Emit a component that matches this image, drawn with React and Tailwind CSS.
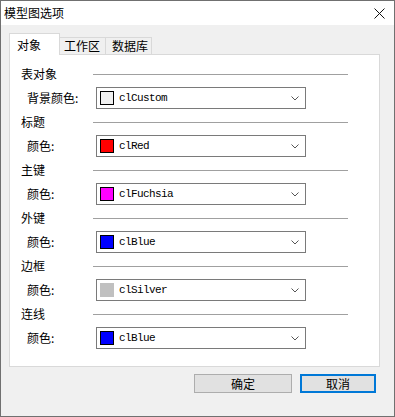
import React from 'react'

const sections = [
  { title: '表对象', label: '背景颜色:', color: '#f0f0f0', name: 'clCustom', edge: '#000' },
  { title: '标题', label: '颜色:', color: '#ff0000', name: 'clRed', edge: '#000' },
  { title: '主键', label: '颜色:', color: '#ff00ff', name: 'clFuchsia', edge: '#000' },
  { title: '外键', label: '颜色:', color: '#0000ff', name: 'clBlue', edge: '#000' },
  { title: '边框', label: '颜色:', color: '#c0c0c0', name: 'clSilver', edge: '#c0c0c0' },
  { title: '连线', label: '颜色:', color: '#0000ff', name: 'clBlue', edge: '#000' },
]

const cjk = { fontFamily: '"Noto Sans CJK SC", "Noto Sans", sans-serif' }

function ColorCombo({ color, name, edge }) {
  return (
    <div className="w-[210px] h-[22px] border border-[#7a7a7a] bg-white flex items-center pl-[3px] pr-[6px]">
      <span className="w-[14px] h-[14px] border flex-none" style={{ backgroundColor: color, borderColor: edge }} />
      <span className="ml-[5px] flex-1 text-[11px] tracking-[-0.6px] text-black font-['Liberation_Mono',monospace]">
        {name}
      </span>
      <svg width="8" height="5" viewBox="0 0 8 5" className="flex-none">
        <path d="M0.5 0.5 L4 4 L7.5 0.5" fill="none" stroke="#555" strokeWidth="1" />
      </svg>
    </div>
  )
}

export default function App() {
  return (
    <div className="w-[395px] h-[417px] border border-[#707070] bg-[#f0f0f0] flex flex-col text-[12px] text-black leading-none" style={cjk}>
      {/* title bar */}
      <div className="h-[24px] bg-white flex items-center justify-between pl-[3px] pr-[9px]">
        <span>模型图选项</span>
        <svg width="11" height="11" viewBox="0 0 11 11">
          <path d="M0.5 0.5 L10.5 10.5 M10.5 0.5 L0.5 10.5" stroke="#111" strokeWidth="1" />
        </svg>
      </div>

      <div className="pl-[8px] pt-[8px] flex flex-col">
        {/* tabs */}
        <div className="flex items-end h-[21px]">
          <div className="relative z-10 w-[51px] h-[22px] -mb-px bg-white border border-b-0 border-[#d9d9d9] pl-[7px] pt-[5px]">
            对象
          </div>
          <div className="w-[46px] h-[17px] border border-l-0 border-b-0 border-[#d9d9d9] pl-[4px] pt-[2px]">
            工作区
          </div>
          <div className="w-[46px] h-[17px] border border-l-0 border-b-0 border-[#d9d9d9] pl-[6px] pt-[2px]">
            数据库
          </div>
        </div>

        {/* panel */}
        <div className="w-[371px] h-[313px] bg-white border border-[#d9d9d9] pt-[9px]">
          {sections.map((s, i) => (
            <div key={i} className="h-[48px]">
              <div className="h-[20px] flex items-center pl-[11px]">
                <span className="w-[72px]">{s.title}</span>
                <span className="w-[255px] h-px bg-[#a0a0a0]" />
              </div>
              <div className="mt-[3px] flex items-center pl-[17px]">
                <span className="w-[69px]">{s.label}</span>
                <ColorCombo color={s.color} name={s.name} edge={s.edge} />
              </div>
            </div>
          ))}
        </div>

        {/* buttons */}
        <div className="flex mt-[7px] pl-[185px] gap-[8px]">
          <button className="w-[98px] h-[19px] bg-[#e1e1e1] border border-[#adadad] leading-none font-normal">
            确定
          </button>
          <button className="w-[76px] h-[19px] bg-[#e1e1e1] border-2 border-[#0078d7] leading-none font-normal">
            取消
          </button>
        </div>
      </div>
    </div>
  )
}
